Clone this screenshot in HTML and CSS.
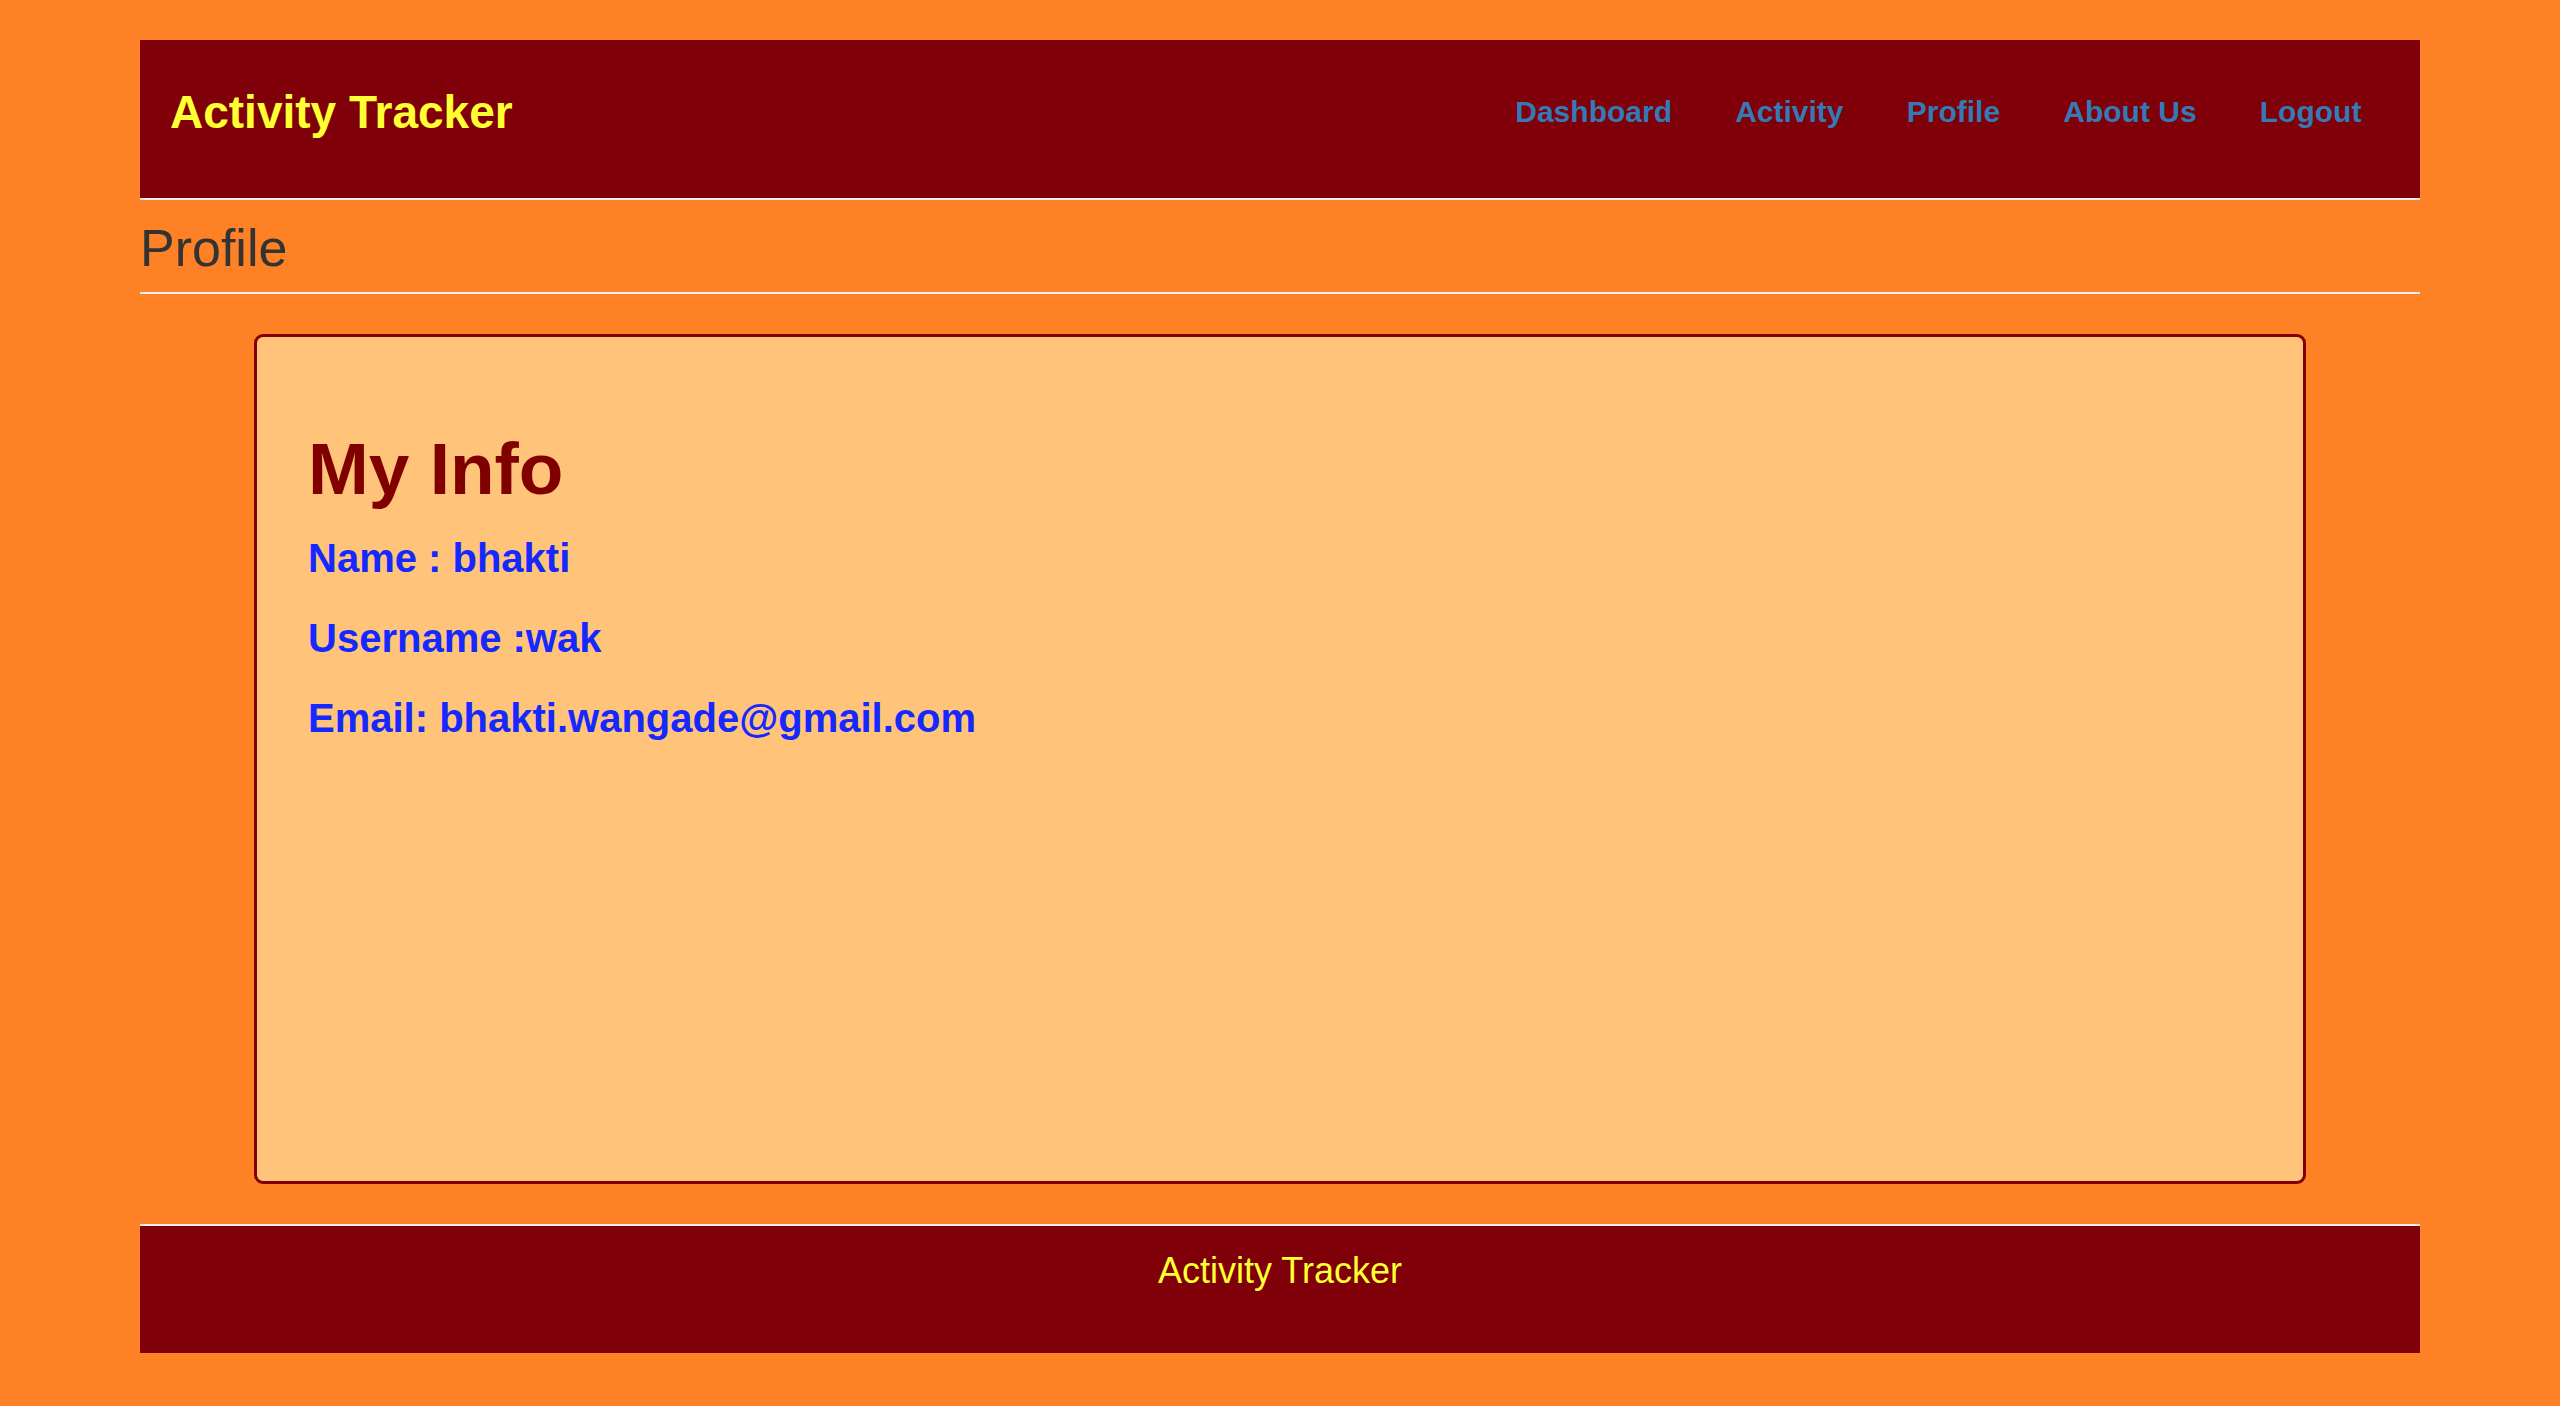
FILE: index.html
```html
<!DOCTYPE html>
<html lang="en">
<head>
<meta charset="utf-8">
<title>Profile - Activity Tracker</title>
<link rel="stylesheet" href="styles.css">
</head>
<body>
<div class="page">
  <header class="header">
    <div class="brand">Activity Tracker</div>
    <nav class="nav">
      <a class="nav-link" href="#">Dashboard</a>
      <a class="nav-link" href="#">Activity</a>
      <a class="nav-link" href="#">Profile</a>
      <a class="nav-link" href="#">About Us</a>
      <a class="nav-link" href="#">Logout</a>
    </nav>
  </header>
  <h2 class="page-title">Profile</h2>
  <section class="card">
    <h1 class="card-title">My Info</h1>
    <p class="info">Name : bhakti</p>
    <p class="info">Username :wak</p>
    <p class="info">Email: bhakti.wangade@gmail.com</p>
  </section>
  <footer class="footer">
    <div class="footer-text">Activity Tracker</div>
  </footer>
</div>
</body>
</html>
```

FILE: styles.css
```css
html, body {
  margin: 0;
  padding: 0;
}

body {
  background: #ff8125;
  font-family: "Liberation Sans", Arial, Helvetica, sans-serif;
}

.page {
  width: 2280px;
  margin: 0 auto;
  padding-top: 40px;
}

.header {
  box-sizing: border-box;
  height: 160px;
  background: #7f0008;
  border-bottom: 2px solid #eeeeee;
  display: flex;
  align-items: flex-start;
  justify-content: space-between;
  padding: 0 27px 0 30px;
}

.brand {
  margin-top: 46px;
  font-size: 46px;
  line-height: 52px;
  font-weight: bold;
  color: #ffff33;
}

.nav {
  margin-top: 55px;
  display: flex;
}

.nav-link {
  font-size: 30px;
  line-height: 34px;
  font-weight: bold;
  color: #337ab7;
  text-decoration: none;
  padding: 0 31.6px;
}

.page-title {
  margin: 0;
  font-size: 52px;
  line-height: 57px;
  font-weight: normal;
  color: #333333;
  padding: 20px 0 15px;
  border-bottom: 2px solid #eeeeee;
}

.card {
  box-sizing: border-box;
  margin: 40px 114px 0;
  height: 850px;
  background: #ffc47a;
  border: 3px solid #800000;
  border-radius: 9px;
  padding: 92px 51px 0;
}

.card-title {
  margin: 0 0 9px;
  font-size: 73px;
  line-height: 80px;
  font-weight: bold;
  color: #800000;
}

.info {
  margin: 0;
  font-size: 40px;
  line-height: 80px;
  font-weight: bold;
  color: #1428ff;
}

.footer {
  box-sizing: border-box;
  margin-top: 40px;
  height: 129px;
  border-top: 2px solid #eeeeee;
  background: #7f0008;
  padding-top: 25px;
  text-align: center;
}

.footer-text {
  font-size: 36px;
  line-height: 40px;
  color: #ffff33;
}
```
